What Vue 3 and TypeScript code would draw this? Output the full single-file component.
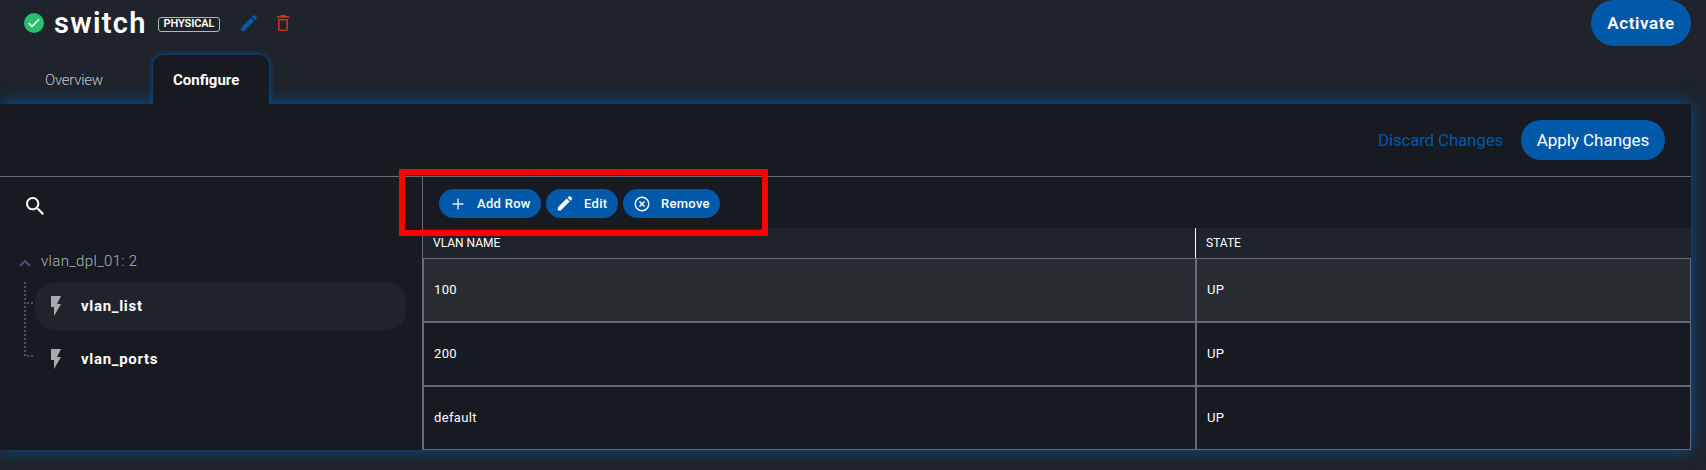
<script setup lang="ts">
interface VlanRow {
  name: string
  state: string
}

const rows: VlanRow[] = [
  { name: '100', state: 'UP' },
  { name: '200', state: 'UP' },
  { name: 'default', state: 'UP' },
]

const items: string[] = ['vlan_list', 'vlan_ports']
const selected = 'vlan_list'
</script>

<template>
  <div class="page">
    <header class="header">
      <svg class="status" viewBox="0 0 20 20">
        <circle cx="10" cy="10" r="10" fill="#27bf6d" />
        <path d="M4.7 10.2l3.3 3.3 7.2-7.2" fill="none" stroke="#fff" stroke-width="1.5" />
      </svg>
      <h1 class="title">switch</h1>
      <span class="badge">PHYSICAL</span>
      <svg class="pencil" viewBox="3 3 18 18">
        <path fill="#0059a9" d="M3 17.25V21h3.75L17.81 9.94l-3.75-3.75L3 17.25zM20.71 7.04a1 1 0 0 0 0-1.41l-2.34-2.34a1 1 0 0 0-1.41 0l-1.83 1.83 3.75 3.75 1.83-1.83z" />
      </svg>
      <svg class="trash" viewBox="0 0 12 16">
        <path fill="#d22f1a" fill-rule="evenodd" d="M4 0h4l1 1h3v1.700H0V1h3zM1 4h10v10.300q0 1.700-1.700 1.700H2.700Q1 16 1 14.300zM2.600 5.600v8.800h6.800V5.600z" />
      </svg>
      <button class="activate"><span>Activate</span></button>
    </header>

    <nav class="tabs">
      <a class="tab">Overview</a>
      <a class="tab active">Configure</a>
    </nav>

    <main class="panel">
      <div class="actions">
        <a class="discard">Discard Changes</a>
        <button class="apply"><span>Apply Changes</span></button>
      </div>
      <div class="content">
        <aside class="sidebar">
          <svg class="search" viewBox="3 3 17.500 17.500">
            <path fill="#fff" d="M15.5 14h-.79l-.28-.27A6.471 6.471 0 0 0 16 9.500 6.500 6.500 0 1 0 9.500 16c1.610 0 3.090-.59 4.230-1.570l.27.28v.79l5 4.990L20.490 19l-4.990-5zm-6 0C7.010 14 5 11.990 5 9.500S7.010 5 9.500 5 14 7.010 14 9.500 11.990 14 9.500 14z" />
          </svg>
          <div class="group">
            <svg class="caret" viewBox="0 0 12 8"><path d="M1 7l5-5 5 5" fill="none" stroke="#40547c" stroke-width="2" /></svg>
            <span>vlan_dpl_01: 2</span>
          </div>
          <div class="tree">
            <svg class="branches" viewBox="0 0 11 76">
              <path d="M1 0V76M3 21H11M3 74H11" fill="none" stroke="#40547c" stroke-width="2" stroke-dasharray="2 2" />
            </svg>
            <ul class="items">
              <li v-for="item in items" :key="item" class="item" :class="{ selected: item === selected }">
                <svg class="bolt" viewBox="7 2 10 20"><path fill="#aaa" d="M7 2v11h3v9l7-12h-4l4-8z" /></svg>
                <span>{{ item }}</span>
              </li>
            </ul>
          </div>
        </aside>

        <section class="grid">
          <div class="toolbar">
            <button class="tool add">
              <svg viewBox="0 0 16 16"><path d="M8 2.500v11M2.500 8h11" stroke="#dbe8f4" stroke-width="1.500" /></svg>
              <span>Add Row</span>
            </button>
            <button class="tool edit">
              <svg viewBox="2 3 20 20"><path fill="#fff" d="M3 17.25V21h3.75L17.81 9.94l-3.75-3.75L3 17.25zM20.71 7.04a1 1 0 0 0 0-1.41l-2.34-2.34a1 1 0 0 0-1.41 0l-1.83 1.83 3.75 3.75 1.83-1.83z" /></svg>
              <span>Edit</span>
            </button>
            <button class="tool remove">
              <svg viewBox="0 0 16 16"><circle cx="8" cy="8" r="6.800" fill="none" stroke="#fff" stroke-width="1.400" /><path d="M5.500 5.500l5 5M10.500 5.500l-5 5" stroke="#fff" stroke-width="1.500" /></svg>
              <span>Remove</span>
            </button>
            <div class="highlight"></div>
          </div>
          <div class="thead">
            <div class="th name"><span>VLAN NAME</span></div>
            <div class="th state"><span>STATE</span></div>
          </div>
          <div class="tbody">
            <div v-for="(row, i) in rows" :key="row.name" class="tr" :class="{ current: i === 0 }">
              <div class="td">{{ row.name }}</div>
              <div class="td">{{ row.state }}</div>
            </div>
          </div>
        </section>
      </div>
    </main>
  </div>
</template>

<style>
body {
  margin: 0;
  background: #1f232b;
  overflow: hidden;
}
</style>

<style scoped>
* {
  box-sizing: border-box;
}
.page {
  height: 470px;
  overflow: hidden;
  background: #1f232b;
  color: #fff;
  font-family: Roboto, "Liberation Sans", sans-serif;
}
svg {
  display: block;
  flex: none;
}
span,
a {
  white-space: nowrap;
}
button {
  border: 0;
  padding: 0;
  color: #fff;
  background: #0059a9;
  font-family: inherit;
}
.header {
  display: flex;
  align-items: center;
  height: 46px;
  padding: 0 15px 0 24px;
}
.status {
  width: 20px;
  height: 20px;
}
.title {
  width: 103px;
  margin: 0 0 0 10px;
  font-size: 29px;
  font-weight: 600;
  line-height: 47px;
  letter-spacing: 1.300px;
}
.badge {
  width: 62px;
  height: 15px;
  margin: 2px 0 0 1px;
  border: 1px solid #b5b7bb;
  border-radius: 3px;
  font-size: 11px;
  line-height: 12px;
  font-weight: 600;
  letter-spacing: -0.100px;
  text-align: center;
}
.pencil {
  width: 16px;
  height: 16px;
  margin-left: 21px;
}
.trash {
  width: 12px;
  height: 16px;
  margin-left: 20px;
}
.activate {
  width: 100px;
  height: 46px;
  margin-left: auto;
  border-radius: 23px;
  font-size: 17px;
  font-weight: 600;
  letter-spacing: 0.600px;
}
.tabs {
  display: flex;
  height: 58px;
  padding: 9px 0 0 0;
}
.tab {
  width: 153px;
  height: 49px;
  padding-left: 45px;
  font-size: 15px;
  line-height: 51px;
  font-weight: 300;
  letter-spacing: -0.250px;
  color: #c6c7ca;
}
.tab.active {
  position: relative;
  z-index: 1;
  width: 116px;
  padding-left: 20px;
  border-radius: 10px 10px 0 0;
  background: #171a21;
  color: #fff;
  font-weight: 700;
  letter-spacing: 0;
  box-shadow: 0 0 6px #0059a9;
  clip-path: inset(-12px -12px 0);
}
.panel {
  position: relative;
  width: 1691px;
  height: 346px;
  background: #171a21;
  box-shadow: 0 0 16px rgba(0, 89, 169, 0.900);
}
.actions {
  display: flex;
  justify-content: flex-end;
  align-items: center;
  height: 73px;
  padding: 0 26px 1px 0;
  border-bottom: 1px solid #64697c;
}
.discard {
  width: 143px;
  font-size: 17px;
  letter-spacing: -0.200px;
  color: #0059a9;
}
.apply {
  width: 144px;
  height: 40px;
  border-radius: 20px;
  font-size: 17px;
  letter-spacing: -0.050px;
}
.content {
  display: flex;
  height: 273px;
}
.sidebar {
  width: 422px;
  padding-top: 20px;
}
.search {
  width: 18px;
  height: 18px;
  margin-left: 26px;
}
.group {
  display: flex;
  align-items: center;
  height: 30px;
  margin-top: 31px;
  padding-left: 19px;
  font-size: 15px;
  font-weight: 300;
  letter-spacing: 0.350px;
  color: #b4b5b8;
}
.caret {
  width: 12px;
  height: 8px;
  margin: 4px 10px 0 0;
}
.tree {
  display: flex;
  margin-top: 6px;
  padding-left: 24px;
}
.branches {
  width: 11px;
  height: 76px;
}
.items {
  width: 371px;
  margin: 0;
  padding: 0;
  list-style: none;
}
.item {
  display: flex;
  align-items: center;
  height: 48px;
  margin-bottom: 5px;
  padding-left: 16px;
  border-radius: 20px;
  font-size: 15px;
  font-weight: 700;
  letter-spacing: 0.700px;
}
.item.selected {
  background: #1f232b;
}
.bolt {
  width: 10px;
  height: 20px;
  margin-right: 20px;
}
.grid {
  width: 1269px;
}
.toolbar {
  position: relative;
  display: flex;
  gap: 5px;
  height: 51px;
  padding: 12px 0 0 16px;
  border-left: 1px solid #64697c;
}
.tool {
  display: flex;
  align-items: center;
  height: 29px;
  padding-left: 11px;
  border-radius: 15px;
  font-size: 13px;
  font-weight: 500;
  letter-spacing: 0.300px;
}
.tool svg {
  width: 16px;
  height: 16px;
}
.tool span {
  margin-left: 11px;
}
.add {
  width: 102px;
}
.edit {
  width: 72px;
}
.remove {
  width: 97px;
}
.highlight {
  position: absolute;
  z-index: 2;
  left: -24px;
  top: -8px;
  width: 369px;
  height: 67px;
  border: 6px solid #f00;
}
.thead {
  display: grid;
  grid-template-columns: 773px 495px;
  height: 30px;
  background: #1f232b;
  border-left: 1px solid #64697c;
  font-size: 12px;
  font-weight: 400;
  line-height: 30px;
}
.th {
  padding-left: 10px;
}
.th.name {
  border-right: 1px solid #fff;
}
.tbody {
  border: 1px solid #64697c;
  border-left-width: 2px;
}
.tr {
  display: grid;
  grid-template-columns: 773px 493px;
  height: 64px;
  border-bottom: 2px solid #64697c;
}
.tr:last-child {
  height: 62px;
  border-bottom: 0;
}
.td {
  padding-left: 10px;
  font-size: 13px;
  font-weight: 400;
  line-height: 62px;
  letter-spacing: 0.350px;
}
.td:first-child {
  border-right: 2px solid #64697c;
}
.tr.current {
  background: #282c31;
}
</style>
